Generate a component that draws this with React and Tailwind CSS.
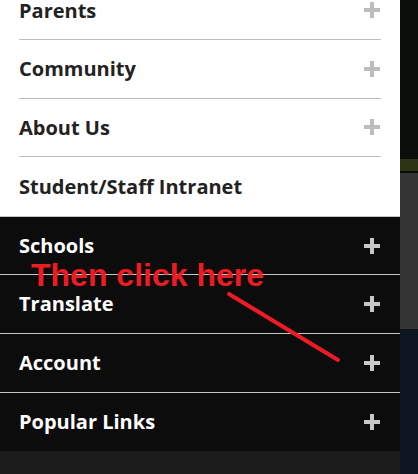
const lightItems = [
  { label: 'Parents', plus: true },
  { label: 'Community', plus: true },
  { label: 'About Us', plus: true },
  { label: 'Student/Staff Intranet', plus: false },
];

const darkItems = ['Schools', 'Translate', 'Account', 'Popular Links'];

function Plus({ dark }) {
  return (
    <span className="relative block w-[16px] h-[16px]">
      <span className={`absolute left-0 top-[6px] w-[16px] h-[4px] ${dark ? 'bg-[#c8c8c8]' : 'bg-[#bdbdbd]'}`} />
      <span className={`absolute top-0 left-[6px] w-[4px] h-[16px] ${dark ? 'bg-[#c8c8c8]' : 'bg-[#bdbdbd]'}`} />
    </span>
  );
}

export default function App() {
  return (
    <div
      className="relative w-[418px] h-[474px] overflow-hidden flex bg-[#1b1b1b]"
      style={{ fontFamily: '"Open Sans", "Noto Sans", sans-serif' }}
    >
      <div className="w-[400px] flex flex-col">
        {/* light part of the menu */}
        <div className="bg-white -mt-[18.6px] px-[19px]">
          {lightItems.map((item, i) => (
            <div
              key={item.label}
              className={`h-[58.6px] flex items-center justify-between ${
                i < lightItems.length - 1 ? 'border-b border-[#bdbdbd]' : ''
              }`}
            >
              <span className="text-[20px] font-bold text-[#222222] leading-none pt-[1px]">{item.label}</span>
              {item.plus && (
                <span className="mr-[1px]">
                  <Plus />
                </span>
              )}
            </div>
          ))}
        </div>

        {/* dark part */}
        <div className="bg-[#0c0c0c] border-t border-[#c4c4c4]">
          {darkItems.map((label, i) => (
            <div
              key={label}
              className={`h-[58.6px] px-[19px] flex items-center justify-between ${
                i < darkItems.length - 1 ? 'border-b border-[#c4c4c4]' : ''
              }`}
            >
              <span className="text-[20px] font-bold text-white leading-none">{label}</span>
              <span className="mr-[1px]">
                <Plus dark />
              </span>
            </div>
          ))}
        </div>
        <div className="flex-1 bg-[#1b1b1b]" />
      </div>

      {/* strip of the page behind */}
      <div className="w-[18px] flex flex-col">
        <div className="h-[173px] bg-[#0b0d08] flex flex-col justify-end">
          <div className="h-[12px] mb-[2px] bg-[#2b3314]" />
        </div>
        <div className="h-[156px] bg-[#353535]" />
        <div className="flex-1 bg-[#0d1520]" />
      </div>

      {/* annotation */}
      <div
        className="absolute left-[31px] top-[259px] text-[32px] font-bold text-[#ec1c24] leading-none"
        style={{ fontFamily: '"Liberation Sans", Arial, sans-serif' }}
      >
        Then click here
      </div>
      <svg className="absolute left-0 top-0 pointer-events-none" width="418" height="474">
        <line x1="229" y1="294" x2="338" y2="360" stroke="#ec1c24" strokeWidth="4" strokeLinecap="round" />
      </svg>
    </div>
  );
}
